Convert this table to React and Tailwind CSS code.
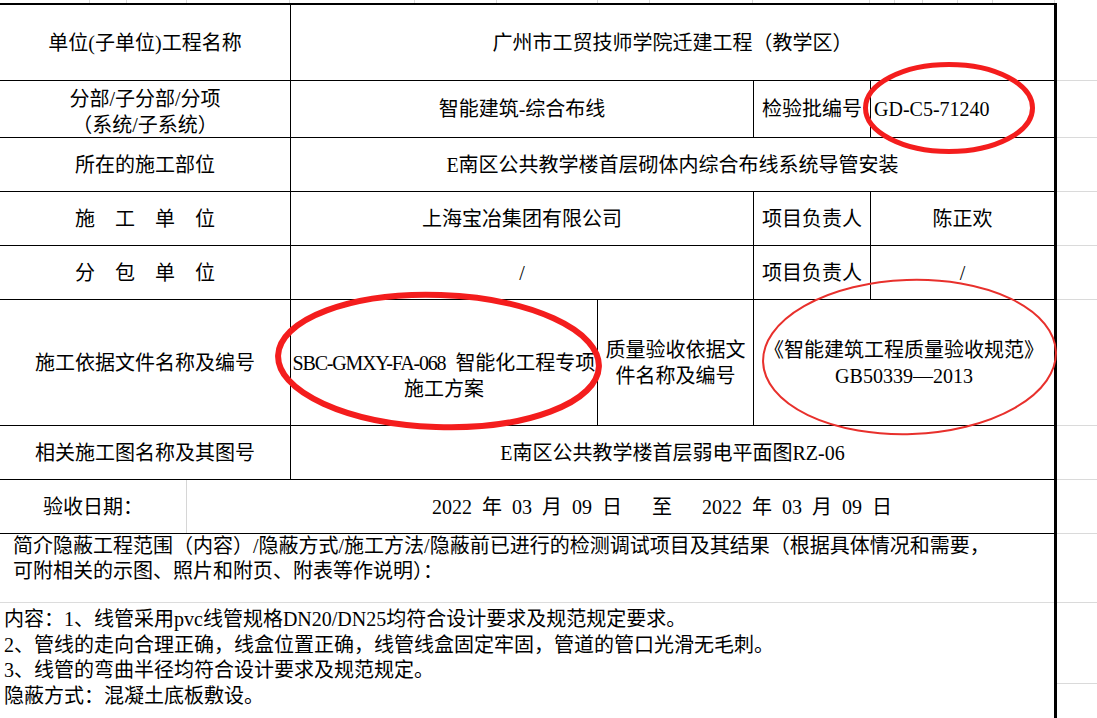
const TOP_COLS = [
  'w-[90px]', 'w-[37px]', 'w-[60px]', 'w-[103px]', 'w-[125px]', 'w-[82px]', 'w-[101px]', 'w-[52px]',
  'w-[103px]', 'w-[117px]', 'w-[25px]', 'w-[28px]', 'w-[35px]', 'w-[35px]', 'w-[62px]',
]

// hauteurs des lignes de grille à droite du tableau
const SIDE_ROWS = ['h-[81px]', 'h-[57px]', 'h-[54px]', 'h-[54px]', 'h-[54px]', 'h-[126px]', 'h-[54px]', 'h-[54px]', 'h-[69px]', 'h-[81px]']

function Label({ children }) {
  return (
    <div className="w-[291px] shrink-0 border-r border-black flex items-center justify-center text-center">
      {children}
    </div>
  )
}

function App() {
  return (
    <div className="relative flex w-[1097px] h-[718px] overflow-hidden bg-white text-black text-[20px] leading-[26px] font-['Liberation_Serif','Noto_Sans_CJK_SC',serif]">
      <div className="w-[1057px] shrink-0 flex flex-col">
        {/* bande de grille au-dessus */}
        <div className="h-[3px] flex">
          {TOP_COLS.map((c, i) => (
            <div key={i} className={`${c} shrink-0 border-r border-[#dadada]`} />
          ))}
        </div>

        <div className="flex-1 flex flex-col border-t-2 border-r-[3px] border-black">
          {/* 1 */}
          <div className="h-[76px] flex border-b border-black">
            <Label>单位(子单位)工程名称</Label>
            <div className="flex-1 flex items-center justify-center">广州市工贸技师学院迁建工程（教学区）</div>
          </div>

          {/* 2 */}
          <div className="h-[57px] flex border-b border-black">
            <Label>
              <div className="pt-[5px]">分部/子分部/分项<br />（系统/子系统）</div>
            </Label>
            <div className="w-[463px] shrink-0 border-r border-black flex items-center justify-center">智能建筑-综合布线</div>
            <div className="w-[117px] shrink-0 border-r border-black flex items-center justify-center">检验批编号</div>
            <div className="flex-1 flex items-center pl-[3px]">GD-C5-71240</div>
          </div>

          {/* 3 */}
          <div className="h-[54px] flex border-b border-black">
            <Label>所在的施工部位</Label>
            <div className="flex-1 flex items-center justify-center">E南区公共教学楼首层砌体内综合布线系统导管安装</div>
          </div>

          {/* 4 */}
          <div className="h-[54px] flex border-b border-black">
            <Label>施　工　单　位</Label>
            <div className="w-[463px] shrink-0 border-r border-black flex items-center justify-center">上海宝冶集团有限公司</div>
            <div className="w-[117px] shrink-0 border-r border-black flex items-center justify-center">项目负责人</div>
            <div className="flex-1 flex items-center justify-center">陈正欢</div>
          </div>

          {/* 5 */}
          <div className="h-[54px] flex border-b border-black">
            <Label>分　包　单　位</Label>
            <div className="w-[463px] shrink-0 border-r border-black flex items-center justify-center">/</div>
            <div className="w-[117px] shrink-0 border-r border-black flex items-center justify-center">项目负责人</div>
            <div className="flex-1 flex items-center justify-center">/</div>
          </div>

          {/* 6 */}
          <div className="h-[126px] flex border-b border-black">
            <Label>施工依据文件名称及编号</Label>
            <div className="w-[307px] shrink-0 border-r border-black flex items-center justify-center text-center pt-[26px] whitespace-nowrap">
              <div>
                <span className="tracking-[-1.2px]">SBC-GMXY-FA-068</span>{'\u2002'}智能化工程专项<br />施工方案
              </div>
            </div>
            <div className="w-[156px] shrink-0 border-r border-black flex items-center justify-center text-center whitespace-nowrap">
              <div>质量验收依据文<br />件名称及编号</div>
            </div>
            <div className="flex-1 flex items-center justify-center text-center whitespace-nowrap">
              <div>《智能建筑工程质量验收规范》<br />GB50339—2013</div>
            </div>
          </div>

          {/* 7 */}
          <div className="h-[54px] flex border-b border-black">
            <Label>相关施工图名称及其图号</Label>
            <div className="flex-1 flex items-center justify-center">E南区公共教学楼首层弱电平面图RZ-06</div>
          </div>

          {/* 8 */}
          <div className="h-[54px] flex border-b border-black">
            <div className="w-[187px] shrink-0 border-r border-[#d6d6d6] flex items-center justify-center">验收日期：</div>
            <div className="flex-1 flex items-center pl-[245px] whitespace-pre">
              {'2022\u2002年\u200203\u2002月\u200209\u2002日\u2002\u2002\u2002至\u2002\u2002\u20022022\u2002年\u200203\u2002月\u200209\u2002日'}
            </div>
          </div>

          {/* intro */}
          <div className="h-[69px] border-b border-[#dcdcdc] pl-[13px] leading-[25px] whitespace-nowrap">
            简介隐蔽工程范围（内容）/隐蔽方式/施工方法/隐蔽前已进行的检测调试项目及其结果（根据具体情况和需要，<br />
            可附相关的示图、照片和附页、附表等作说明）：
          </div>

          {/* contenu */}
          <div className="flex-1 pl-[4px] pt-[4px] leading-[25.5px] whitespace-nowrap">
            <p>内容：1、线管采用pvc线管规格DN20/DN25均符合设计要求及规范规定要求。</p>
            <p>2、管线的走向合理正确，线盒位置正确，线管线盒固定牢固，管道的管口光滑无毛刺。</p>
            <p>3、线管的弯曲半径均符合设计要求及规范规定。</p>
            <p>隐蔽方式：混凝土底板敷设。</p>
          </div>
        </div>
      </div>

      {/* grille à droite */}
      <div className="flex-1 flex flex-col">
        {SIDE_ROWS.map((h, i) => (
          <div key={i} className={`${h} shrink-0 border-b border-[#dadada]`} />
        ))}
      </div>

      {/* annotations rouges */}
      <svg className="absolute inset-0 pointer-events-none" width="1097" height="718" viewBox="0 0 1097 718">
        <ellipse cx="949" cy="108" rx="83.5" ry="43.5" fill="none" stroke="#f41d1d" strokeWidth="5" />
        <ellipse cx="438.5" cy="361" rx="160.5" ry="66" fill="none" stroke="#f41d1d" strokeWidth="6" transform="rotate(2 438.5 361)" />
        <ellipse cx="909.5" cy="357" rx="146.5" ry="77" fill="none" stroke="#e8302c" strokeWidth="2" transform="rotate(-2 909.5 357)" />
      </svg>
    </div>
  )
}

export default App
